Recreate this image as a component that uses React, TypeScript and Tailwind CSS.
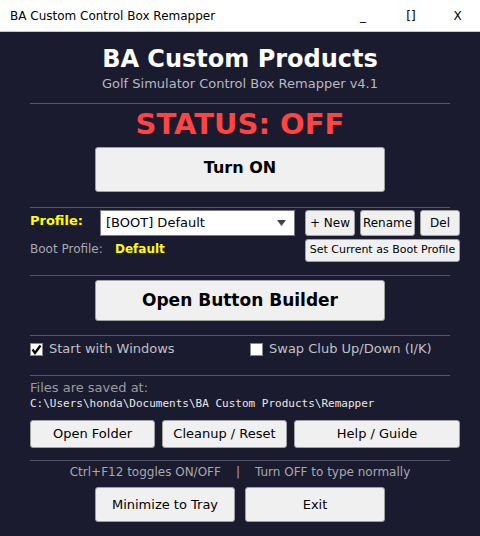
import React from "react";

const btn =
  "flex items-center justify-center shrink-0 bg-[#f0f0f0] border border-[#a0a0a0] rounded-[3px] text-black";

const Divider = () => <div className="h-px bg-[#555566] mx-[30px]" />;

export default function App() {
  return (
    <div className="w-[480px] h-[536px] flex flex-col bg-[#1b1b2f] font-['DejaVu_Sans',sans-serif] overflow-hidden">
      {/* title bar */}
      <div className="h-[32px] bg-white border-b border-[#c8c8c8] flex items-center text-[12px] text-black shrink-0">
        <span className="ml-[10px] flex-1">BA Custom Control Box Remapper</span>
        <span className="w-[48px] text-center -ml-[3px]">_</span>
        <span className="w-[48px] text-center">[]</span>
        <span className="w-[45px] text-center">X</span>
      </div>

      {/* header */}
      <div className="flex flex-col items-center pt-[12px]">
        <div className="text-[24px] font-bold text-white leading-[30px]">BA Custom Products</div>
        <div className="text-[13px] text-[#b8b8c0] leading-[16px] mt-[2px]">
          Golf Simulator Control Box Remapper v4.1
        </div>
      </div>
      <div className="mt-[11px]">
        <Divider />
      </div>

      <div className="flex flex-col items-center">
        <div className="text-[29px] font-bold text-[#ff4444] leading-[36px] mt-[2px]">STATUS: OFF</div>
        <button className={`${btn} w-[290px] h-[45px] mt-[5px] pb-[3px] text-[16px] font-bold`}>Turn ON</button>
      </div>
      <div className="mt-[15px]">
        <Divider />
      </div>

      {/* profile */}
      <div className="flex px-[30px] mt-[2px] text-[12px]">
        <div className="flex flex-col">
          <div className="flex items-center h-[26px]">
            <span className="w-[70px] text-[13px] font-bold text-[#ffff00] -mt-[4px]">Profile:</span>
            <div className="w-[195px] h-[26px] bg-white border border-[#7a7a7a] flex items-center pl-[5px] pr-[8px] text-[13px] text-black">
              <span className="flex-1">[BOOT] Default</span>
              <svg width="9" height="6" viewBox="0 0 9 6">
                <path d="M0 0h9L4.5 6z" fill="#444" />
              </svg>
            </div>
          </div>
          <div className="flex items-center h-[24px] mt-[1px]">
            <span className="w-[85px] text-[#a8a8b0]">Boot Profile:</span>
            <span className="text-[12px] font-bold text-[#ffff00]">Default</span>
          </div>
        </div>
        <div className="flex flex-col ml-[10px] gap-[3px]">
          <div className="flex gap-[5px] h-[26px]">
            <button className={`${btn} w-[50px] text-[12px]`}>+ New</button>
            <button className={`${btn} w-[55px] text-[12px]`}>Rename</button>
            <button className={`${btn} w-[40px] text-[12px]`}>Del</button>
          </div>
          <button className={`${btn} w-[155px] h-[23px] text-[11px]`}>Set Current as Boot Profile</button>
        </div>
      </div>
      <div className="mt-[13px]">
        <Divider />
      </div>

      <div className="flex justify-center mt-[4px]">
        <button className={`${btn} w-[290px] h-[41px] text-[17px] font-bold`}>Open Button Builder</button>
      </div>
      <div className="mt-[14px]">
        <Divider />
      </div>

      {/* options */}
      <div className="flex px-[30px] h-[26px] items-center text-[13px] text-[#c0c0c8]">
        <label className="flex items-center w-[220px]">
          <span className="w-[13px] h-[13px] bg-white border border-[#888] flex items-center justify-center">
            <svg width="11" height="11" viewBox="0 0 11 11">
              <path d="M1.5 5.5l2.5 3.5L9.5 1.5" stroke="#000" strokeWidth="2.2" fill="none" />
            </svg>
          </span>
          <span className="ml-[6px]">Start with Windows</span>
        </label>
        <label className="flex items-center">
          <span className="w-[13px] h-[13px] bg-white border border-[#888]" />
          <span className="ml-[6px]">Swap Club Up/Down (I/K)</span>
        </label>
      </div>
      <div className="mt-[13px]">
        <Divider />
      </div>

      {/* files */}
      <div className="px-[30px] mt-[4px]">
        <div className="text-[13px] text-[#9a9aa2] leading-[16px]">Files are saved at:</div>
        <div className="font-['DejaVu_Sans_Mono',monospace] text-[11px] text-[#e8e8e8] leading-[14px] mt-[1px]">
          C:\Users\honda\Documents\BA Custom Products\Remapper
        </div>
        <div className="flex gap-[7px] mt-[9px] h-[28px] text-[13px]">
          <button className={`${btn} w-[125px]`}>Open Folder</button>
          <button className={`${btn} w-[125px]`}>Cleanup / Reset</button>
          <button className={`${btn} w-[166px]`}>Help / Guide</button>
        </div>
      </div>
      <div className="mt-[12px]">
        <Divider />
      </div>

      <div className="flex justify-center text-[12px] text-[#a8a8b0] mt-[2px] leading-[18px]">
        <span>Ctrl+F12 toggles ON/OFF</span>
        <span className="mx-[15px]">|</span>
        <span>Turn OFF to type normally</span>
      </div>
      <div className="flex justify-center gap-[10px] mt-[6px] text-[13px]">
        <button className={`${btn} w-[140px] h-[35px]`}>Minimize to Tray</button>
        <button className={`${btn} w-[140px] h-[35px]`}>Exit</button>
      </div>
    </div>
  );
}
